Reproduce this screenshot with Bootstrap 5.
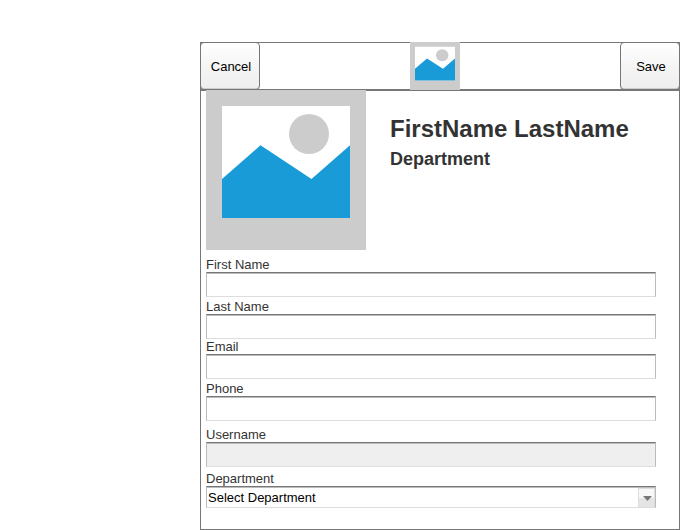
<!DOCTYPE html>
<html lang="en">
<head>
<meta charset="utf-8">
<meta name="viewport" content="width=device-width, initial-scale=1">
<title>Edit Profile</title>
<link href="https://cdn.jsdelivr.net/npm/bootstrap@5.3.0/dist/css/bootstrap.min.css" rel="stylesheet">
<style>
  body { font-family: "Liberation Sans", Arial, sans-serif; font-size: 13px; line-height: 15px; color: #333; background: #fff; }
  .app-shell { margin-left: 200px; padding-top: 42px; }
  .app-bar, .app-panel { box-shadow: inset 0 0 0 1px #777; }
  .app-bar .btn {
    width: 60px; height: 48px; padding: 0 0 0 2px;
    font-size: 13px; line-height: 15px; color: #000;
    border: 1px solid #777; border-radius: 4px;
    background: linear-gradient(#fff, #f5f5f5 50%, #eee);
    box-shadow: inset 0 -1px 0 #ccc;
  }
  .app-logo { padding-right: 10px; }
  .app-logo svg { width: 50px; height: 48px; }
  .app-panel { padding: 0 24px 22px 6px; }
  .profile-photo { width: 160px; height: 160px; }
  .profile-head { gap: 24px; margin-bottom: 7px; }
  .profile-head h1 { font-size: 24px; line-height: 30px; font-weight: 700; }
  .profile-head h2 { font-size: 18px; line-height: 30px; font-weight: 700; }
  .gap-small { margin-bottom: 2px; }
  .gap-mid { margin-bottom: 4px; }
  .gap-large { margin-bottom: 6px; }
  .app-panel .form-control, .app-panel .form-select {
    height: 25px; min-height: 0; padding: 0 2px;
    font-size: 13px; line-height: 15px; color: #000;
    border: 1px solid #bbb; border-top-color: #777; border-bottom-color: #ddd;
    border-radius: 0; box-shadow: inset 0 1px 0 #bbb;
  }
  .app-panel .form-control:disabled { background: #efefef; }
  .app-panel .form-select {
    height: 22px; padding: 1px 20px 0 1px;
    background-image: url("data:image/svg+xml,%3Csvg xmlns='http://www.w3.org/2000/svg' width='17' height='19'%3E%3Crect width='17' height='19' fill='%23ddd'/%3E%3Crect x='1' y='1' width='15' height='9' fill='%23f8f8f8'/%3E%3Crect x='1' y='10' width='15' height='9' fill='%23e4e4e4'/%3E%3Cpath d='M5 8h9l-4.500 5z' fill='%23777'/%3E%3C/svg%3E");
    background-size: 17px 19px; background-position: right 0 top 1px;
  }
</style>
<script src="https://cdn.jsdelivr.net/npm/bootstrap@5.3.0/dist/js/bootstrap.bundle.min.js"></script>
</head>
<body>
<svg class="d-none" aria-hidden="true">
  <symbol id="picture" viewBox="0 0 160 160" preserveAspectRatio="none">
    <path fill="#ccc" d="M0 0h160v160H0z"/>
    <path fill="#fff" d="M16 16h128v112H16z"/>
    <circle cx="103" cy="44" r="20" fill="#ccc"/>
    <path fill="#189bd7" d="M16 89 54.500 55.300 105.500 89 144 55.300V128H16z"/>
  </symbol>
</svg>
<div class="app-shell min-vh-100 d-flex flex-column">
  <header class="app-bar d-flex align-items-center">
    <button type="button" class="btn">Cancel</button>
    <div class="app-logo mx-auto">
      <svg class="d-block" role="img" aria-label="Logo"><use href="#picture"/></svg>
    </div>
    <button type="submit" form="profile" class="btn">Save</button>
  </header>
  <main class="app-panel flex-grow-1">
    <div class="profile-head d-flex">
      <svg class="profile-photo d-block flex-shrink-0" role="img" aria-label="Profile photo"><use href="#picture"/></svg>
      <div class="pt-4">
        <h1 class="m-0">FirstName LastName</h1>
        <h2 class="m-0">Department</h2>
      </div>
    </div>
    <form id="profile">
      <div class="gap-small">
        <label class="d-block" for="first">First Name</label>
        <input type="text" class="form-control" id="first">
      </div>
      <div>
        <label class="d-block" for="last">Last Name</label>
        <input type="text" class="form-control" id="last">
      </div>
      <div class="gap-small">
        <label class="d-block" for="email">Email</label>
        <input type="email" class="form-control" id="email">
      </div>
      <div class="gap-large">
        <label class="d-block" for="phone">Phone</label>
        <input type="tel" class="form-control" id="phone">
      </div>
      <div class="gap-mid">
        <label class="d-block" for="username">Username</label>
        <input type="text" class="form-control" id="username" disabled>
      </div>
      <div>
        <label class="d-block" for="department">Department</label>
        <select class="form-select" id="department">
          <option>Select Department</option>
        </select>
      </div>
    </form>
  </main>
</div>
</body>
</html>
